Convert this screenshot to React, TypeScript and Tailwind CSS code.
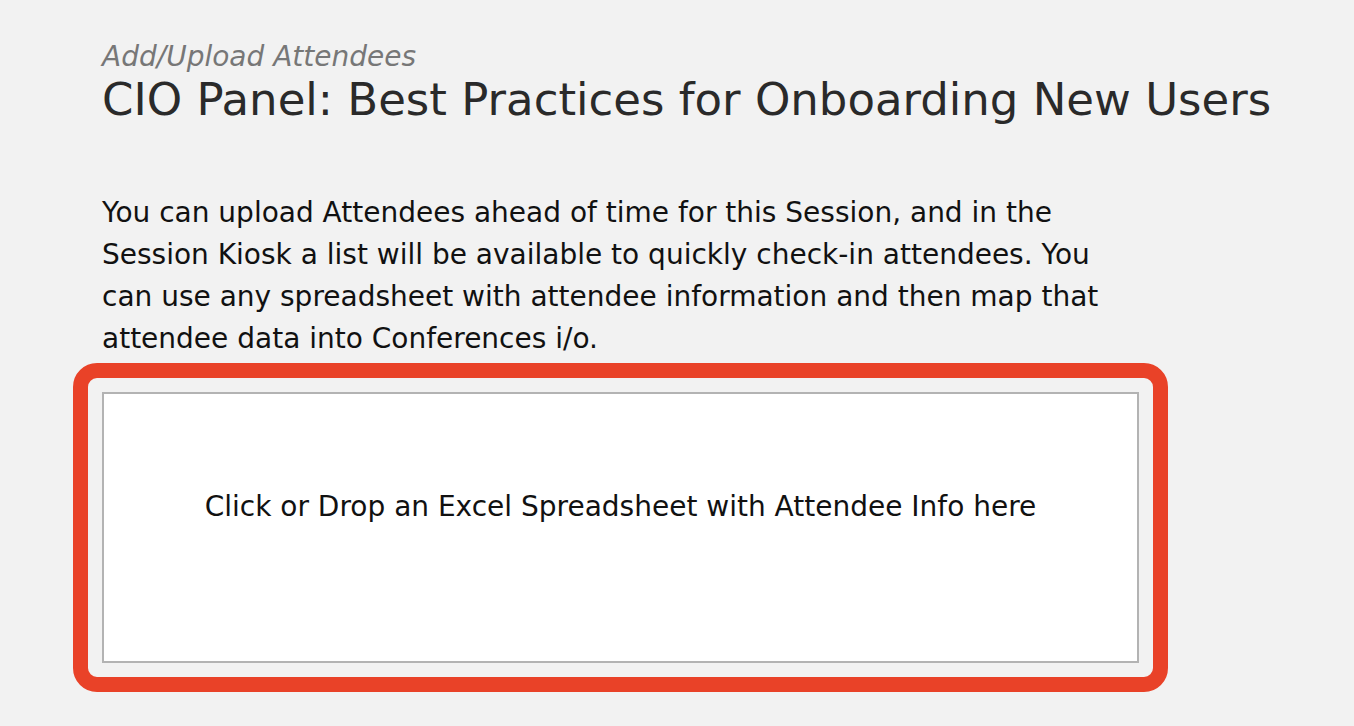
export default function App() {
  return (
    <div className="min-h-screen bg-[#f2f2f2] pl-[102px] pt-[40px] font-['DejaVu_Sans',sans-serif]">
      <div className="w-[1037px]">
        <div className="text-[28px] italic leading-[34px] text-[#777777]">Add/Upload Attendees</div>
        <h1 className="text-[45px] leading-[52px] text-[#2a2a2a] whitespace-nowrap">
          CIO Panel: Best Practices for Onboarding New Users
        </h1>

        <p className="mt-[66px] w-[1000px] text-[28px] leading-[42px] text-[#111111]">
          You can upload Attendees ahead of time for this Session, and in the Session Kiosk a list will be
          available to quickly check-in attendees. You can use any spreadsheet with attendee information and then
          map that attendee data into Conferences i/o.
        </p>

        <div className="relative mt-[32px]">
          <div className="h-[271px] border-2 border-[#b3b3b3] bg-white pt-[92px] text-center text-[28px] text-[#111111]">
            Click or Drop an Excel Spreadsheet with Attendee Info here
          </div>
          {/* red highlight annotation */}
          <div className="pointer-events-none absolute -inset-[29px] rounded-[24px] border-[15px] border-[#e94228]" />
        </div>
      </div>
    </div>
  );
}
